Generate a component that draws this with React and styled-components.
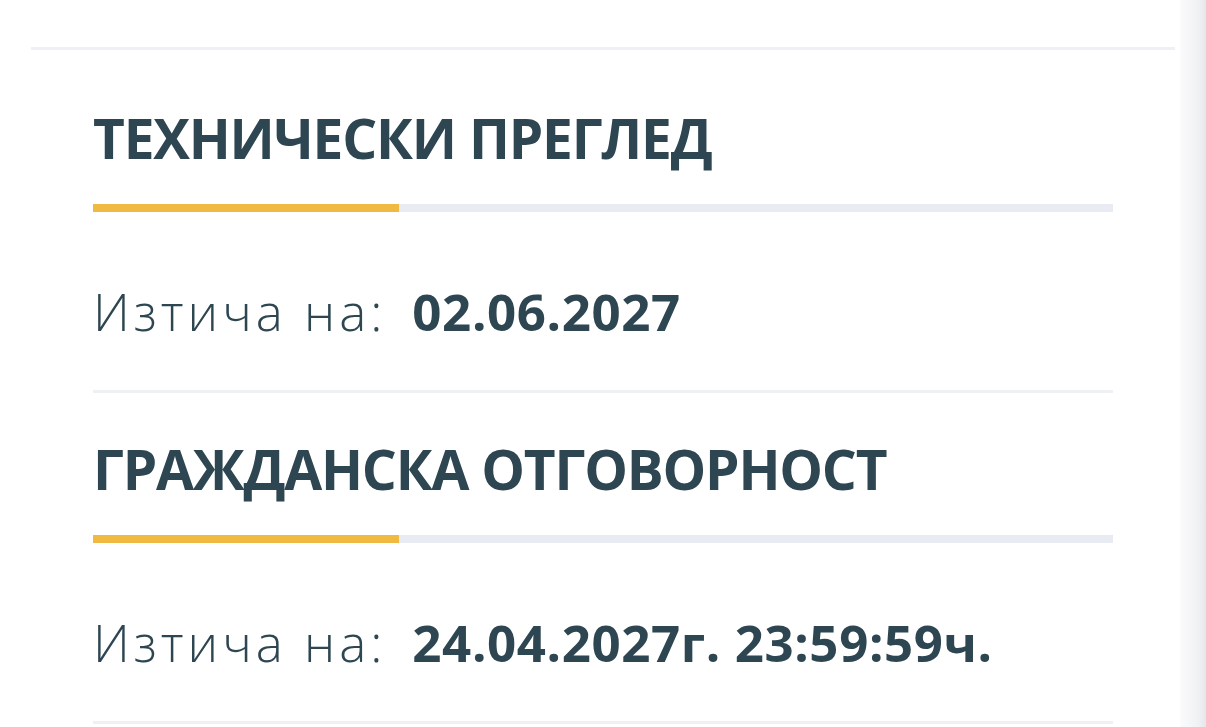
import React from "react";
import styled, { createGlobalStyle } from "styled-components";

const GlobalStyle = createGlobalStyle`
  html, body {
    margin: 0;
    padding: 0;
    background: #ffffff;
  }
  body {
    font-family: "Open Sans", "Noto Sans", sans-serif;
    color: #2d4651;
  }
`;

const sections = [
  { title: "ТЕХНИЧЕСКИ ПРЕГЛЕД", progress: 30, value: "02.06.2027" },
  { title: "ГРАЖДАНСКА ОТГОВОРНОСТ", progress: 30, value: "24.04.2027г. 23:59:59ч." },
];

const App = () => {
  return (
    <>
      <GlobalStyle />
      <Screen>
        <Main>
          <TopRule />
          <Content>
            {sections.map((s) => (
              <Section key={s.title}>
                <Title>{s.title}</Title>
                <Track>
                  <Fill style={{ width: `${s.progress}%` }} />
                </Track>
                <Expiry>
                  <Label>Изтича на:</Label>
                  <Value>{s.value}</Value>
                </Expiry>
                <Divider />
              </Section>
            ))}
          </Content>
        </Main>
        <Edge />
      </Screen>
    </>
  );
};

export default App;

const Screen = styled.div`
  display: flex;
  width: 1206px;
  height: 727px;
  overflow: hidden;
`;

const Main = styled.div`
  flex: 1;
  padding-top: 47px;
`;

const TopRule = styled.div`
  height: 3px;
  margin: 0 5px 0 31px;
  background: #eef0f6;
`;

const Content = styled.div`
  padding: 0 67px 0 93px;
  padding-top: 56px;
`;

const Section = styled.div`
  display: flex;
  flex-direction: column;
`;

const Title = styled.h2`
  margin: 0;
  font-size: 55px;
  line-height: 64px;
  font-weight: 700;
  letter-spacing: -1.2px;
  white-space: nowrap;
`;

const Track = styled.div`
  margin-top: 34px;
  height: 8px;
  background: #e8ebf2;
`;

const Fill = styled.div`
  height: 100%;
  background: #f0b942;
`;

const Expiry = styled.div`
  display: flex;
  align-items: baseline;
  margin-top: 71px;
  font-size: 51px;
  line-height: 56px;
  white-space: nowrap;
`;

const Label = styled.span`
  font-weight: 300;
  letter-spacing: 4px;
  margin-right: 26px;
`;

const Value = styled.span`
  font-weight: 700;
  letter-spacing: 0.6px;
`;

const Divider = styled.div`
  margin-top: 51px;
  height: 3px;
  background: #eef0f4;
  margin-bottom: 44px;
`;

const Edge = styled.div`
  width: 26px;
  background: linear-gradient(to right, #fbfbfc, #f0f1f4 70%, #e6e7eb);
`;
